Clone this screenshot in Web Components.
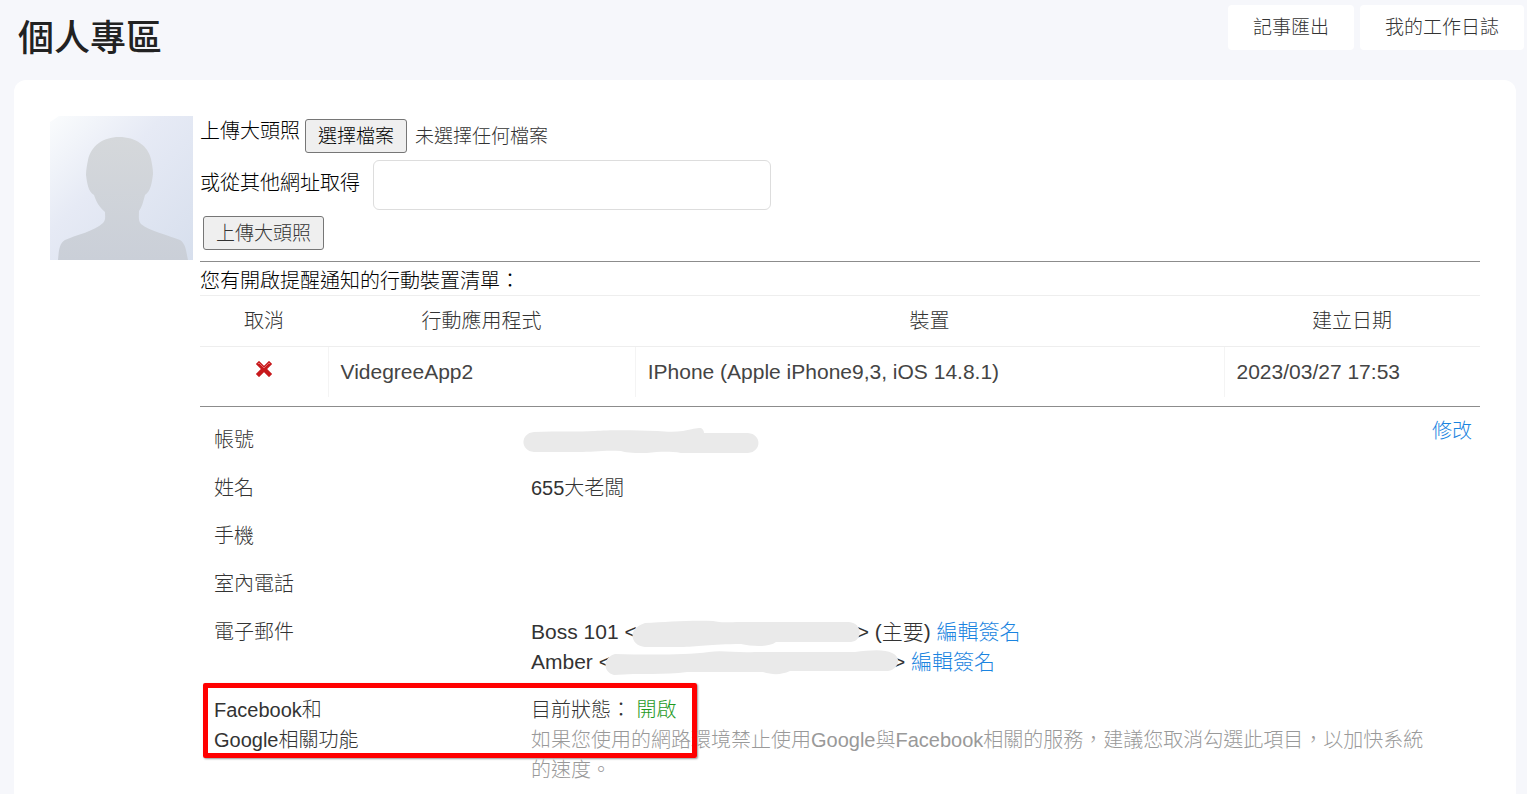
<!DOCTYPE html>
<html lang="zh-Hant">
<head>
<meta charset="utf-8">
<title>個人專區</title>
<style>
  body {
    margin: 0;
    background: #f6f7fb;
    color: #333;
    font: 300 20px/30px "Liberation Sans", "Noto Sans CJK TC", sans-serif;
  }

  a {
    color: #1a84e0;
    text-decoration: none;
  }

  .large {
    font-size: 21px;
  }

  .on {
    color: #1f9a1f;
  }

  .hint {
    color: #999;
  }
</style>
</head>
<body>

<page-header>
  個人專區
  <nav-button slot="actions">記事匯出</nav-button>
  <nav-button slot="actions">我的工作日誌</nav-button>
</page-header>

<profile-card>
  <user-avatar slot="avatar"></user-avatar>

  <avatar-upload></avatar-upload>
  <device-list></device-list>

  <profile-row label="帳號">
    <redacted-text shape="account"></redacted-text>
    <a slot="action" href="#edit">修改</a>
  </profile-row>
  <profile-row label="姓名">655大老闆</profile-row>
  <profile-row label="手機"></profile-row>
  <profile-row label="室內電話"></profile-row>
  <profile-row label="電子郵件">
    <div class="large">Boss 101 &lt;<redacted-text shape="primary"></redacted-text>&gt; (主要) <a href="#sign-1">編輯簽名</a></div>
    <div class="large">Amber &lt;<redacted-text shape="secondary"></redacted-text>&gt; <a href="#sign-2">編輯簽名</a></div>
  </profile-row>
  <profile-row label="Facebook和&#10;Google相關功能" marked>
    <div>目前狀態： <span class="on">開啟</span></div>
    <div class="hint">如果您使用的網路環境禁止使用Google與Facebook相關的服務，建議您取消勾選此項目，以加快系統的速度。</div>
  </profile-row>
</profile-card>

<script>
function makeTemplate(html) {
  const template = document.createElement('template');
  template.innerHTML = html;
  return template;
}

// Attaches an open shadow root and clones the class template into it
class BaseElement extends HTMLElement {
  constructor() {
    super();
    this._shadowRoot = this.attachShadow({ mode: 'open' });
    this._shadowRoot.appendChild(this.constructor.template.content.cloneNode(true));
  }
}

class PageHeader extends BaseElement {
  static template = makeTemplate(`
    <style>
      :host {
        display: flex;
        justify-content: space-between;
        align-items: flex-start;
        min-height: 80px;
      }

      h1 {
        margin: 18px 0 0 18px;
        color: #222;
        font-size: 36px;
        font-weight: 500;
        line-height: 42px;
      }

      nav {
        display: flex;
        gap: 6px;
        padding: 5px 3px 0 0;
      }
    </style>
    <h1><slot></slot></h1>
    <nav><slot name="actions"></slot></nav>
  `);
}

class NavButton extends BaseElement {
  static template = makeTemplate(`
    <style>
      :host {
        display: block;
      }

      button {
        height: 45px;
        padding: 0 25px;
        border: 0;
        border-radius: 4px;
        background: #fff;
        color: #333;
        font: inherit;
        font-size: 19px;
        cursor: pointer;
      }
    </style>
    <button type="button"><slot></slot></button>
  `);
}

class ProfileCard extends BaseElement {
  static template = makeTemplate(`
    <style>
      :host {
        display: flex;
        gap: 7px;
        margin: 0 11px 0 14px;
        padding: 36px;
        border-radius: 12px;
        background: #fff;
      }

      .content {
        flex: 1;
        min-width: 0;
      }
    </style>
    <slot name="avatar"></slot>
    <div class="content"><slot></slot></div>
  `);
}

class UserAvatar extends BaseElement {
  static template = makeTemplate(`
    <style>
      :host {
        display: block;
        flex: none;
      }

      svg {
        display: block;
      }
    </style>
    <svg width="143" height="144" viewBox="0 0 143 144" aria-hidden="true">
      <defs>
        <linearGradient id="bg" x1="0" y1="0" x2="1" y2="1">
          <stop offset="0" stop-color="#fafcfd"/>
          <stop offset=".4" stop-color="#e6eaf5"/>
          <stop offset="1" stop-color="#d7dfed"/>
        </linearGradient>
        <linearGradient id="body" x1="0" y1="0" x2="0" y2="1">
          <stop offset="0" stop-color="#d5d8db"/>
          <stop offset="1" stop-color="#cacfd8"/>
        </linearGradient>
      </defs>
      <path fill="url(#bg)" d="M9 0H143V144H0V6Z"/>
      <path fill="url(#body)" d="M8 144C9 134 9 128 15 124C26 119 45 115 53 107C56 104 55 100 55 96C49 91 46 85 44 79C38 76 37 66 36 59C36 54 37 49 38 44C41 30 53 21 69 21C86 21 98 30 101 43C102 48 103 53 103 58C102 66 101 75 95 79C93 86 92 91 89 95C89 100 88 105 91 108C99 115 118 119 130 124C136 128 136 135 138 144Z"/>
    </svg>
  `);
}

class AvatarUpload extends BaseElement {
  static template = makeTemplate(`
    <style>
      :host {
        display: block;
        padding-bottom: 11px;
        border-bottom: 1px solid #8c8c8c;
        color: #000;
      }

      .row {
        display: flex;
        align-items: flex-start;
      }

      .file {
        gap: 5px;
        min-height: 44px;
      }

      .picker {
        display: flex;
        align-items: center;
        gap: 8px;
        margin-top: 3px;
        color: #333;
        font-size: 19px;
      }

      .url {
        gap: 13px;
      }

      .url label {
        line-height: 46px;
      }

      button {
        height: 34px;
        padding: 2px 12px 0;
        border: 1px solid #767676;
        border-radius: 3px;
        background: #efefef;
        color: #333;
        font: inherit;
        font-size: 19px;
      }

      .choose {
        color: #000;
      }

      output {
        padding-top: 2px;
      }

      input[type="url"] {
        box-sizing: border-box;
        width: 398px;
        height: 50px;
        padding: 0 12px;
        border: 1px solid #ddd;
        border-radius: 6px;
        font: inherit;
      }

      .submit {
        margin: 6px 3px 0;
      }
    </style>
    <div class="row file">
      <label for="file">上傳大頭照</label>
      <div class="picker">
        <input type="file" id="file" accept="image/*" hidden>
        <button type="button" class="choose">選擇檔案</button>
        <output for="file">未選擇任何檔案</output>
      </div>
    </div>
    <div class="row url">
      <label for="url">或從其他網址取得</label>
      <input type="url" id="url">
    </div>
    <button type="submit" class="submit">上傳大頭照</button>
  `);

  connectedCallback() {
    const file = this._shadowRoot.querySelector('#file');
    const status = this._shadowRoot.querySelector('output');

    this._shadowRoot.querySelector('.choose').addEventListener('click', () => file.click());
    file.addEventListener('change', () => {
      status.textContent = file.files.length ? file.files[0].name : '未選擇任何檔案';
    });
  }
}

class DeviceList extends BaseElement {
  static template = makeTemplate(`
    <style>
      :host {
        display: block;
        margin-bottom: 9px;
        padding: 5px 0 9px;
        border-bottom: 1px solid #8c8c8c;
      }

      table {
        width: 100%;
        border-collapse: collapse;
        table-layout: fixed;
      }

      caption {
        color: #000;
        line-height: 28px;
        text-align: left;
      }

      th {
        height: 50px;
        padding: 0;
        border-top: 1px solid #eee;
        border-bottom: 1px solid #eee;
        font-weight: inherit;
      }

      td {
        height: 50px;
        padding: 0 12px;
        color: #444;
        font-size: 21px;
      }

      td + td {
        border-left: 1px solid #f4f4f4;
      }

      .cancel { width: 10%; }
      .app { width: 24%; }
      .created { width: 20%; }

      td button {
        display: block;
        margin: 0 auto;
        padding: 0 0 6px;
        border: 0;
        background: none;
      }

      svg {
        display: block;
      }
    </style>
    <table>
      <caption>您有開啟提醒通知的行動裝置清單：</caption>
      <thead>
        <tr>
          <th class="cancel">取消</th>
          <th class="app">行動應用程式</th>
          <th>裝置</th>
          <th class="created">建立日期</th>
        </tr>
      </thead>
      <tbody>
        <tr>
          <td>
            <button type="button" aria-label="取消">
              <svg width="18" height="18" viewBox="0 0 18 18">
                <path d="M4 1 9 6 14 1 17 4 12 9 17 14 14 17 9 12 4 17 1 14 6 9 1 4Z" fill="#c8191c" stroke="#d9686a" stroke-linejoin="round"/>
                <path d="M3 4 4 3 9 8 14 3 15 4" fill="none" stroke="#e06a6a"/>
              </svg>
            </button>
          </td>
          <td>VidegreeApp2</td>
          <td>IPhone (Apple iPhone9,3, iOS 14.8.1)</td>
          <td>2023/03/27 17:53</td>
        </tr>
      </tbody>
    </table>
  `);
}

class ProfileRow extends BaseElement {
  static template = makeTemplate(`
    <style>
      :host {
        display: flex;
        position: relative;
      }

      .label {
        box-sizing: border-box;
        flex: none;
        width: 25%;
        padding: 9px 0 9px 14px;
        white-space: pre-line;
      }

      .value {
        flex: 1;
        min-width: 0;
        min-height: 30px;
        padding: 9px 40px 9px 11px;
      }

      slot[name="action"]::slotted(a) {
        margin-right: 8px;
      }

      /* red frame laid over the highlighted setting */
      :host([marked])::after {
        content: "";
        position: absolute;
        top: -3px;
        left: 3px;
        box-sizing: border-box;
        width: 494px;
        height: 75px;
        border: 5px solid #f00;
        border-radius: 2px;
        box-shadow: 1px 1px 2px #999;
        pointer-events: none;
      }
    </style>
    <div class="label"></div>
    <div class="value"><slot></slot></div>
    <slot name="action"></slot>
  `);

  connectedCallback() {
    this._shadowRoot.querySelector('.label').textContent = this.getAttribute('label');
  }
}

// Hand-drawn grey strokes that cover private values
const STROKES = {
  account: {
    width: 236,
    height: 26,
    path: 'M11 3C35 2 55 3 72 2C85 1 110 1 134 2C145 3 152 3 160 2C170 0 172 -1 178 -1C180 0 181 2 181 4H225C239 5 239 23 225 24H158C145 22 135 23 124 24C112 24 105 24 98 22C80 21 70 23 55 23H11C-3 22 -3 4 11 3Z',
  },
  primary: {
    width: 232,
    height: 28,
    path: 'M14 3C35 2 60 0 82 1C90 3 98 2 110 2H218C232 3 232 21 220 22H145C137 28 120 26 110 24C80 24 65 27 50 27H14C0 26 -5 9 14 3Z',
  },
  secondary: {
    width: 294,
    height: 26,
    path: 'M10 4C45 5 80 5 104 2C118 0 130 3 150 2H250C265 0 280 -1 287 3C297 7 294 19 283 21H185C176 25 168 25 158 22H82C60 25 35 23 9 25C-3 22 -2 7 10 4Z',
  },
};

class RedactedText extends BaseElement {
  static template = makeTemplate(`
    <style>
      :host {
        display: inline-block;
        position: relative;
        height: 26px;
        margin: 0 -6px;
        vertical-align: middle;
      }

      :host([shape="account"]) {
        margin: 0 -8px;
      }

      svg {
        display: block;
        overflow: visible;
      }
    </style>
    <svg aria-hidden="true"><path fill="#eaeaea"/></svg>
  `);

  connectedCallback() {
    const stroke = STROKES[this.getAttribute('shape')];
    const svg = this._shadowRoot.querySelector('svg');
    svg.setAttribute('width', stroke.width);
    svg.setAttribute('height', stroke.height);
    svg.querySelector('path').setAttribute('d', stroke.path);
  }
}

customElements.define('page-header', PageHeader);
customElements.define('nav-button', NavButton);
customElements.define('profile-card', ProfileCard);
customElements.define('user-avatar', UserAvatar);
customElements.define('avatar-upload', AvatarUpload);
customElements.define('device-list', DeviceList);
customElements.define('profile-row', ProfileRow);
customElements.define('redacted-text', RedactedText);
</script>
</body>
</html>
